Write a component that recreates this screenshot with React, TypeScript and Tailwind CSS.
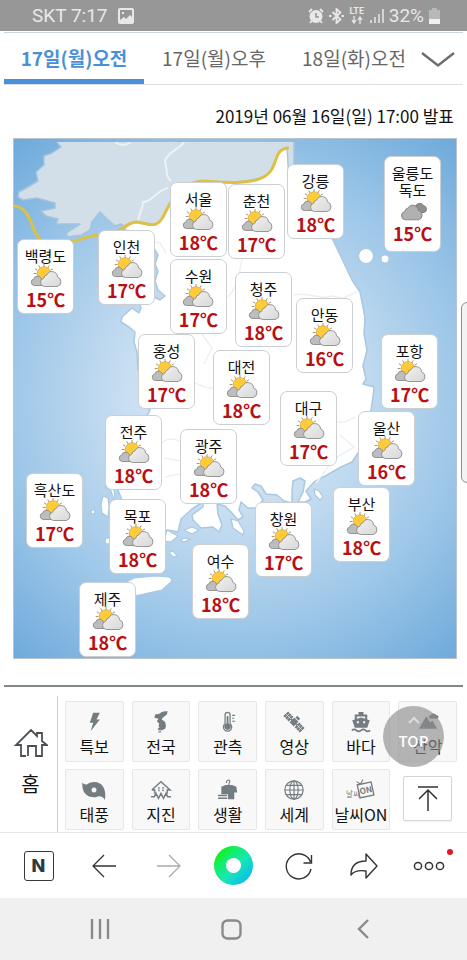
import React from 'react';

type Sky = 'partly' | 'cloudy';
type City = { name: string[]; temp: number; x: number; y: number; sky?: Sky };

const MAP_W = 444;
const MAP_H = 521;

const cities: City[] = [
  { name: ['서울'], temp: 18, x: 157, y: 44 },
  { name: ['춘천'], temp: 17, x: 215, y: 46 },
  { name: ['강릉'], temp: 18, x: 274, y: 26 },
  { name: ['울릉도', '독도'], temp: 15, x: 371, y: 18, sky: 'cloudy' },
  { name: ['백령도'], temp: 15, x: 4, y: 101 },
  { name: ['인천'], temp: 17, x: 85, y: 92 },
  { name: ['수원'], temp: 17, x: 157, y: 121 },
  { name: ['청주'], temp: 18, x: 222, y: 134 },
  { name: ['안동'], temp: 16, x: 283, y: 160 },
  { name: ['홍성'], temp: 17, x: 125, y: 196 },
  { name: ['대전'], temp: 18, x: 200, y: 212 },
  { name: ['포항'], temp: 17, x: 368, y: 196 },
  { name: ['대구'], temp: 17, x: 267, y: 253 },
  { name: ['전주'], temp: 18, x: 92, y: 277 },
  { name: ['광주'], temp: 18, x: 167, y: 291 },
  { name: ['울산'], temp: 16, x: 345, y: 273 },
  { name: ['흑산도'], temp: 17, x: 13, y: 335 },
  { name: ['목포'], temp: 18, x: 96, y: 361 },
  { name: ['창원'], temp: 17, x: 242, y: 364 },
  { name: ['부산'], temp: 18, x: 320, y: 349 },
  { name: ['여수'], temp: 18, x: 179, y: 406 },
  { name: ['제주'], temp: 18, x: 66, y: 444 },
];

function PartlyCloudy() {
  return (
    <svg viewBox="0 0 32 24" className="h-6 w-8 shrink-0" aria-label="구름많음">
      <defs>
        <linearGradient id="cloudLight" x1="0" y1="0" x2="1" y2="1">
          <stop offset="0" stopColor="#f1f1f1" />
          <stop offset="1" stopColor="#d8d8d8" />
        </linearGradient>
      </defs>
      <g stroke="#8d7b4d" strokeWidth=".8">
        <path d="M14 3V0M10.2 4L8.7 1.4M17.8 4l1.500-2.600M7.4 6.300L4.9 4.800M20.500 6.300l2.500-1.500M6.500 9.500H3.700M7.500 13l-2 1.200" />
      </g>
      <circle cx="14" cy="9.500" r="6.800" fill="#ffcb38" stroke="#c99a35" strokeWidth=".6" />
      <path d="M4.300 21.500a3.300 3.300 0 0 1-.5-6.500 3.800 3.800 0 0 1 7-1l4 4-2 3.500z" fill="#bdbdbd" stroke="#808080" strokeWidth=".8" />
      <path d="M14.500 22.500a4.200 4.200 0 0 1-.7-8.300 3.500 3.500 0 0 1 3-3.300 5.600 5.600 0 0 1 10.700 2 5 5 0 0 1-.3 9.600z" fill="url(#cloudLight)" stroke="#808080" strokeWidth=".8" />
    </svg>
  );
}

function Cloudy() {
  return (
    <svg viewBox="0 0 32 24" className="h-6 w-8 shrink-0" aria-label="흐림">
      <path d="M17 14.500a4 4 0 0 1 1.500-6.500 4.600 4.600 0 0 1 8.200-.3 3.500 3.500 0 0 1 .3 6.800h-4z" fill="#8f8f8f" stroke="#747474" strokeWidth=".8" />
      <path d="M8.500 21.800a4.200 4.200 0 0 1-.7-8.300 3.500 3.500 0 0 1 3-3.200 5.600 5.600 0 0 1 10.600 2 4.900 4.900 0 0 1 .2 9.500z" fill="#b1b1b1" stroke="#777" strokeWidth=".8" />
    </svg>
  );
}

function Pin({ city }: { city: City }) {
  return (
    <li
      className={
        'absolute flex w-[57px] flex-col items-center rounded-[7px] border border-[#cccfd2] bg-white pt-[7px] ' +
        (city.name.length > 1 ? 'pb-[7px]' : 'pb-[3px]')
      }
      style={{ left: `${(city.x / MAP_W) * 100}%`, top: `${(city.y / MAP_H) * 100}%` }}
    >
      {city.name.map((line) => (
        <span key={line} className="text-[15px] leading-[17px] whitespace-nowrap text-[#111]">{line}</span>
      ))}
      {city.sky === 'cloudy' ? <Cloudy /> : <PartlyCloudy />}
      <strong className="text-[18px] leading-[22px] font-bold whitespace-nowrap text-[#b90e12]">{city.temp}℃</strong>
    </li>
  );
}

function KoreaMap() {
  return (
    <svg viewBox="13 138 444 521" className="block h-full w-full" preserveAspectRatio="none" aria-hidden="true">
      <defs>
        <radialGradient id="sea" gradientUnits="userSpaceOnUse" cx="235" cy="400" r="348">
          <stop offset="0" stopColor="#dceaf6" />
          <stop offset=".32" stopColor="#c8def1" />
          <stop offset=".66" stopColor="#9cc6e8" />
          <stop offset="1" stopColor="#6ba8da" />
        </radialGradient>
        <clipPath id="landClip"><rect x="13" y="142" width="444" height="517" /></clipPath>
      </defs>
      <rect x="13" y="138" width="444" height="521" fill="url(#sea)" />
      <g clipPath="url(#landClip)" strokeLinejoin="round">
        <path
          d="M55 140l6 7-9 6-8 3v9l-8 7 2 9-10 6-9 5-1 5 5 3 14-2 18 5v5l-14 3 5 5 12 3-2 5 12 0 12 0-14 9 2 4 14-2 8-5 2-8 8-10 7 7 8 7 6-2 8 6h75l90-20V140z"
          fill="#d3dfe8" stroke="#a4c3de" strokeWidth="1.500"
        />
        <path
          d="M124 230C130 221 138 222 146 223C154 226 161 226 166 211C174 195 185 181 205 181C225 183 245 182 260 178C282 169 272 150 287 147L289 180L318 222L333 240L342 259L352 280L360 292L362 302L365 318L364 334L367 350L363 366L366 379L363 384L374 387L373 397L371 410L366 425L360 450L352 462L341 467L327 475L314 482L306 491L311 499L305 502L298 502L303 492L305 481L300 478L293 481L292 491L292 503L284 501L277 495L266 494L261 486L255 484L252 488L258 492L263 500L257 508L248 508L241 502L239 510L243 517L238 520L231 512L225 506L217 504L218 514L222 525L219 532L213 527L201 528L193 520L192 515L203 507L203 502L192 509L181 519L178 532L168 530L160 535L130 520L122 500L118 490L110 486L114 474L122 459L128 440L145 420L150 410L146 406L148 390L138 370L137 352L134 342L135 332L129 327L121 322L122 317L132 308L139 313L141 308L138 300L150 295L160 300L165 296L158 290L155 281L158 271L155 264L158 255L154 248L150 237L140 232Z"
          fill="#fff" stroke="#aac8e2" strokeWidth="1.500"
        />
        <g fill="#fff" stroke="#a9c8e2" strokeWidth="1.200">
          <path d="M119 586l15-8 22-2 13 1q4 2 2 5l-9 8-23 5-24 3-15-6zM103 496l5 2 1 9-1 10-6-4-1-9zM105 486l6 5 4 13-1-17zM167 530l11 6-7 6-7-1zM184 530l8-3 7 3-7 4zM180 540l5-2 5 1-6 3zM170 551l4 1 3 4-4 1-3-3zM231 519l7 2 6 10-1 4-10-7zM314 489l5 2 4 6-3 3-5-5z" />
          <circle cx="93" cy="512" r="2" />
          <circle cx="108" cy="541" r="3" />
          <circle cx="366" cy="256" r="7.500" />
          <circle cx="385" cy="259" r="4" />
        </g>
        <path d="M115 142q8 6 16 0M184 142c-5 8-17 10-19 19 3 10 0 15 6 20M168 188c-12 2-15 14-25 14 0 8-4 10-5 20" fill="none" stroke="#edf2f5" strokeWidth="2" />
        <path d="M150 241l10 2 6 10M293 295c17-4 28 6 38 1l12 2 14-6M228 297c8-8 11-20 14-38M202 334l10 14-8 16M190 382c10 1 15 8 24 6M162 443c9-9 18 0 25 0M164 458l16 3M290 422h55l10-5M340 435l14 12-20 12-18 24M165 477l14-3 6 5" fill="none" stroke="#eef1f3" strokeWidth="1.500" />
        <path d="M13 206C33 206 30 235 44 243S80 237 98 235C124 236 122 222 138 222C153 226 159 228 166 211C174 195 182 183 202 181C222 182 240 184 256 180C283 173 269 149 289 148" fill="none" stroke="#dec044" strokeWidth="3" />
      </g>
    </svg>
  );
}

const g = '#737c80';
const menu: { label: string; icon: React.ReactNode }[] = [
  { label: '특보', icon: <path d="M11 1h8l-4 8h4L8 23l3-10H7z" fill={g} /> },
  { label: '전국', icon: <path d="M20-1l-1 4-5 4-1 2 4 3 1 5-1 3-4 2-4 0-1-2 2-1-1-3 1-2-3-3 2-3-5-1 1-4 5-1 3-2 4-1zM9 23h3v1.500H9z" fill={g} /> },
  { label: '관측', icon: <g fill="none" stroke={g}><path d="M8.500 14V3.500a3 3 0 0 1 6 0V14a5 5 0 1 1-6 0z" strokeWidth="1.500" /><circle cx="11.500" cy="17.500" r="3.500" fill={g} /><path d="M11.500 5v11" strokeWidth="2.200" /><path d="M17 4h3.500M17 7.500h2.500M17 11h3.500" strokeWidth="1.300" /></g> },
  { label: '영상', icon: <g fill={g} transform="rotate(45 12 12)"><path d="M-2 8h9v8h-9zM17 8h9v8h-9z" /><path d="M8.500 8h7v8h-7zM6 11h12v2H6zM9.500 4h5v3h-5z" /><path d="M1 8v8M4 8v8M-2 12h9M20 8v8M23 8v8M17 12h9" stroke="#f8f8f8" strokeWidth=".7" /></g> },
  { label: '바다', icon: <g><path fillRule="evenodd" d="M9 0h6v3h4.500v6l3 1-3 9h-15l-3-9 3-1V3H9zM7 5.500V8l5-1.500L17 8V5.500zM7 11v2.500h2.500V11zM14.500 11v2.500H17V11z" fill={g} /><path d="M1 22q3-2.500 5.500 0t5.500 0 5.500 0 5.500 0" stroke={g} strokeWidth="2" fill="none" /></g> },
  { label: '산악', icon: <g fill={g}><path d="M1 20L10 5l5 8 2-3 6 10zM15 8a2 2 0 0 1 0-4 4 4 0 0 1 7 0 2 2 0 0 1 1 4z" /></g> },
  { label: '태풍', icon: <path fillRule="evenodd" d="M-2 3Q0 6 4 5C9 1 19 1 23 8c3 5 3 11 2 16-2-4-6-5-9-4C9 22 1 19-1 12-2 9-2 6-2 3zM12 9a3 3 0 1 0 .01 0z" fill={g} /> },
  { label: '지진', icon: <g fill="none" stroke={g} strokeWidth="1.700"><path d="M1 12L12 2l11 10h-3.500v4.500M4.500 16.500V12H1" /><path d="M0 20h4l2-4 3 6 3-6 3 6 3-6 2 4h4" /><path d="M9.500 8.500v5M14.500 8.500v5" strokeDasharray="2 1" /></g> },
  { label: '생활', icon: <g><path d="M10 3.500q0-3.500 3-3.500 2.500 1 0 4.500V7" fill="none" stroke={g} strokeWidth="1.300" /><path d="M4 8l5-2h8l5 2 1 7h-3.500v8H12v-6H4z" fill={g} /><path d="M0 18.500h11M0 22h11" stroke={g} strokeWidth="1.800" /></g> },
  { label: '세계', icon: <g fill="none" stroke={g} strokeWidth="1.400"><circle cx="12" cy="12" r="11" /><ellipse cx="12" cy="12" rx="5" ry="11" /><path d="M12 1v22M1 12h22M3 6.500h18M3 17.500h18" /></g> },
  { label: '날씨ON', icon: <g><text x="-6" y="20" fontSize="9" fill={g}>날씨</text><g transform="rotate(-12 17 12)"><path d="M9 4h17v16H9z" fill="none" stroke={g} strokeWidth="1.600" /><path d="M9 0l4 4 4-5" fill="none" stroke={g} strokeWidth="1.300" /><text x="10" y="16" fontSize="10" fontWeight="700" fill={g}>ON</text></g></g> },
];

function StatusBar() {
  return (
    <header className="flex h-[31px] items-center bg-[#979797] pr-[27px] pl-8 text-[#e8e8e8]">
      <span className="font-[Roboto,sans-serif] text-[19px] leading-6">SKT 7:17</span>
      <svg viewBox="0 0 16 16" className="ml-2.5 size-4" aria-hidden="true">
        <path fillRule="evenodd" fill="#e8e8e8" d="M2 0h12a2 2 0 0 1 2 2v12a2 2 0 0 1-2 2H2a2 2 0 0 1-2-2V2a2 2 0 0 1 2-2zM2 2v10l4-3 2 2 4-4 2 2V2zM4 4h2v2H4z" />
      </svg>
      <div className="ml-auto flex items-center gap-[5px]">
        <svg viewBox="0 0 16 16" className="size-4" aria-hidden="true">
          <path d="M1 4l3-3M15 4l-3-3M3.500 13L2 15M12.500 13l1.500 2" stroke="#e8e8e8" strokeWidth="1.800" />
          <circle cx="8" cy="8.500" r="6.500" fill="#e8e8e8" />
          <path d="M8 5v4h3" stroke="#979797" strokeWidth="1.600" fill="none" />
        </svg>
        <svg viewBox="0 0 15 16" className="h-4 w-[15px]" fill="none" stroke="#e8e8e8" strokeWidth="1.800" aria-hidden="true">
          <path d="M3.500 4l8 7.500L7.500 15V1l4 3.500-8 7.500" />
          <path d="M0 8h2.500M12.500 8H15" strokeWidth="2.200" />
        </svg>
        <span className="flex w-4 flex-col items-center font-[Roboto,sans-serif] text-[9px] leading-[9px] font-bold">
          LTE
          <svg viewBox="0 0 12 8" className="h-2 w-3" stroke="#e8e8e8" strokeWidth="1.300" fill="none" aria-hidden="true">
            <path d="M3 0v6M1 4l2 3 2-3M9 8V2M7 4l2-3 2 3" />
          </svg>
        </span>
        <svg viewBox="0 0 14 14" className="size-3.5" stroke="#e8e8e8" strokeWidth="1.500" aria-hidden="true">
          <path d="M1 14v-3M5 14V8M9 14V5M13 14V0" />
        </svg>
        <span className="font-[Roboto,sans-serif] text-[19px] leading-6">32%</span>
        <svg viewBox="0 0 11 16" className="h-4 w-[11px]" aria-hidden="true">
          <path d="M3 0h5v2h3v13H0V2h3z" fill="#b8b8b8" />
          <path d="M0 11h11v5H0z" fill="#f0f0f0" />
        </svg>
      </div>
    </header>
  );
}

const tabClass = 'h-full w-[140px] shrink-0 border-b-[5px] pt-1 text-[19px] leading-7 whitespace-nowrap';

export default function App() {
  return (
    <div className="relative flex min-h-screen flex-col overflow-hidden bg-white font-['Noto_Sans_CJK_KR',sans-serif] text-[#111]">
      <StatusBar />
      <nav className="mx-1 mt-px flex h-[53px] border-t border-b border-t-[#cbd5df] border-b-[#dcdedf]" role="tablist">
        <button role="tab" aria-selected="true" className={tabClass + ' border-[#4a90d9] font-bold text-[#4a90d9]'}>17일(월)오전</button>
        <button role="tab" aria-selected="false" className={tabClass + ' border-transparent text-[#666]'}>17일(월)오후</button>
        <button role="tab" aria-selected="false" className={tabClass + ' border-transparent text-[#666]'}>18일(화)오전</button>
        <button aria-label="날짜 더 보기" className="flex flex-1 items-center pb-0">
          <svg viewBox="0 0 36 18" className="-ml-1 h-[18px] w-9 shrink-0" fill="none" stroke="#6e6e6e" strokeWidth="2.500" aria-hidden="true">
            <path d="M2 3l16 12.500L34 3" />
          </svg>
        </button>
      </nav>
      <p className="pt-[19px] pr-[13px] pb-[10px] text-right text-[17px] leading-6">2019년 06월 16일(일) 17:00 발표</p>

      <section className="relative mr-[10px] ml-[13px] aspect-[444/521]" aria-label="날씨 지도">
        <KoreaMap />
        <div className="pointer-events-none absolute inset-0 border border-[#b9c4cd]" />
        <ul>
          {cities.map((c) => <Pin key={c.name[0]} city={c} />)}
        </ul>
      </section>
      <div className="absolute top-[302px] -right-4 h-[181px] w-[22px] rounded-md border border-[#8f8f8f] bg-[#f3f3f3]" />

      <section className="relative mx-1 mt-[26px] flex border-t-2 border-[#80878b] pt-[9px]">
        <a href="#home" className="flex w-[54px] shrink-0 flex-col items-center border-r border-[#c8ccd0] pt-8">
          <svg viewBox="0 0 34 30" className="h-[30px] w-[34px]" fill="none" stroke="#4a5054" strokeWidth="1.800" aria-hidden="true">
            <path d="M12 28H7V17H2L17 2l6 6V5h5v8l5 4h-5v11h-6V18h-8v10" />
          </svg>
          <span className="mt-3 text-[20px] leading-7">홈</span>
        </a>
        <div className="ml-[7px] mr-1.5 grid flex-1 grid-cols-6 gap-x-2 gap-y-[7px] pt-[5px] pb-0.5">
          {menu.map((m) => (
            <a key={m.label} href={'#' + m.label} className="flex h-[61px] flex-col items-center rounded-xs border border-[#e5e7e8] bg-[#f8f8f8] pt-2.5">
              <svg viewBox="0 0 24 24" className="h-5 w-5 overflow-visible" aria-hidden="true">{m.icon}</svg>
              <span className="mt-[3px] text-[16px] leading-[22px] whitespace-nowrap">{m.label}</span>
            </a>
          ))}
          <button aria-label="맨 위로" className="mx-[5px] mt-[7px] mb-[9px] flex items-center justify-center rounded-xs border border-[#d3d6d8] bg-white shadow-xs">
            <svg viewBox="0 0 20 25" className="h-[25px] w-5" fill="none" stroke="#333" strokeWidth="1.500" aria-hidden="true">
              <path d="M0 1h20M10 25V4M1 13l9-9 9 9" />
            </svg>
          </button>
        </div>
        <button className="absolute top-[19px] right-[19px] flex size-[61px] flex-col items-center rounded-full bg-[#8d8d8d]/65 pt-2 text-[15px] leading-[22px] font-medium text-white">
          <svg viewBox="0 0 12 8" className="my-0.5 h-2 w-3" fill="none" stroke="#ddd" strokeWidth="2" aria-hidden="true"><path d="M1 7l5-5 5 5" /></svg>
          <span className="mt-1">TOP</span>
        </button>
      </section>

      <nav className="grid h-[66px] grid-cols-7 place-items-center border-t border-[#e3e5e9] bg-white px-1.5" aria-label="브라우저">
        <button className="flex size-[30px] items-center justify-center rounded-[3px] border border-[#33383d] font-[Inter,sans-serif] text-[18px] leading-none font-extrabold text-[#30373d]">N</button>
        <button aria-label="뒤로">
          <svg viewBox="0 0 24 24" className="size-6" fill="none" stroke="#333" strokeWidth="1.300"><path d="M24 12H1M12 1L1 12l11 11" /></svg>
        </button>
        <button aria-label="앞으로">
          <svg viewBox="0 0 24 24" className="size-6" fill="none" stroke="#aaa" strokeWidth="1.300"><path d="M0 12h23M12 1l11 11-11 11" /></svg>
        </button>
        <button aria-label="그린닷" className="flex size-[39px] items-center justify-center rounded-full bg-linear-135 from-[#16f02c] from-20% via-[#1be7b0] via-55% to-[#16b9f0] to-90%">
          <span className="size-[15px] rounded-full bg-white" />
        </button>
        <button aria-label="새로고침">
          <svg viewBox="0 0 28 28" className="size-7" fill="none" stroke="#333" strokeWidth="1.400"><path d="M26 17A12.500 12.500 0 1 1 25.500 10M26.500 3v8h-8" /></svg>
        </button>
        <button aria-label="공유">
          <svg viewBox="0 0 28 26" className="h-[26px] w-7" fill="none" stroke="#333" strokeWidth="1.400" strokeLinejoin="round"><path d="M16 1l11 12-11 12v-7c-7-1-12 0-15 4C1 12 7 8 16 8z" /></svg>
        </button>
        <button aria-label="더보기" className="relative">
          <svg viewBox="0 0 32 10" className="h-2.5 w-8" fill="none" stroke="#333" strokeWidth="1.500"><circle cx="5" cy="5" r="3.600" /><circle cx="16" cy="5" r="3.600" /><circle cx="27" cy="5" r="3.600" /></svg>
          <span className="absolute -top-3 -right-2 size-1.5 rounded-full bg-[#e01620]" />
        </button>
      </nav>
      <nav className="grid flex-1 grid-cols-3 place-items-center bg-[#f0f0f0] pr-[38px] pl-[34px]" aria-label="시스템">
        <button aria-label="최근 앱">
          <svg viewBox="0 0 20 20" className="size-5" stroke="#8a8a8a" strokeWidth="2.400"><path d="M2 0v20M10 0v20M18 0v20" /></svg>
        </button>
        <button aria-label="홈 화면">
          <svg viewBox="0 0 21 21" className="size-[21px]" fill="none" stroke="#8a8a8a" strokeWidth="2.400"><rect x="1.500" y="1.500" width="18" height="18" rx="5" /></svg>
        </button>
        <button aria-label="이전">
          <svg viewBox="0 0 12 20" className="h-5 w-3" fill="none" stroke="#8a8a8a" strokeWidth="2.400"><path d="M11 1L2 10l9 9" /></svg>
        </button>
      </nav>
    </div>
  );
}
